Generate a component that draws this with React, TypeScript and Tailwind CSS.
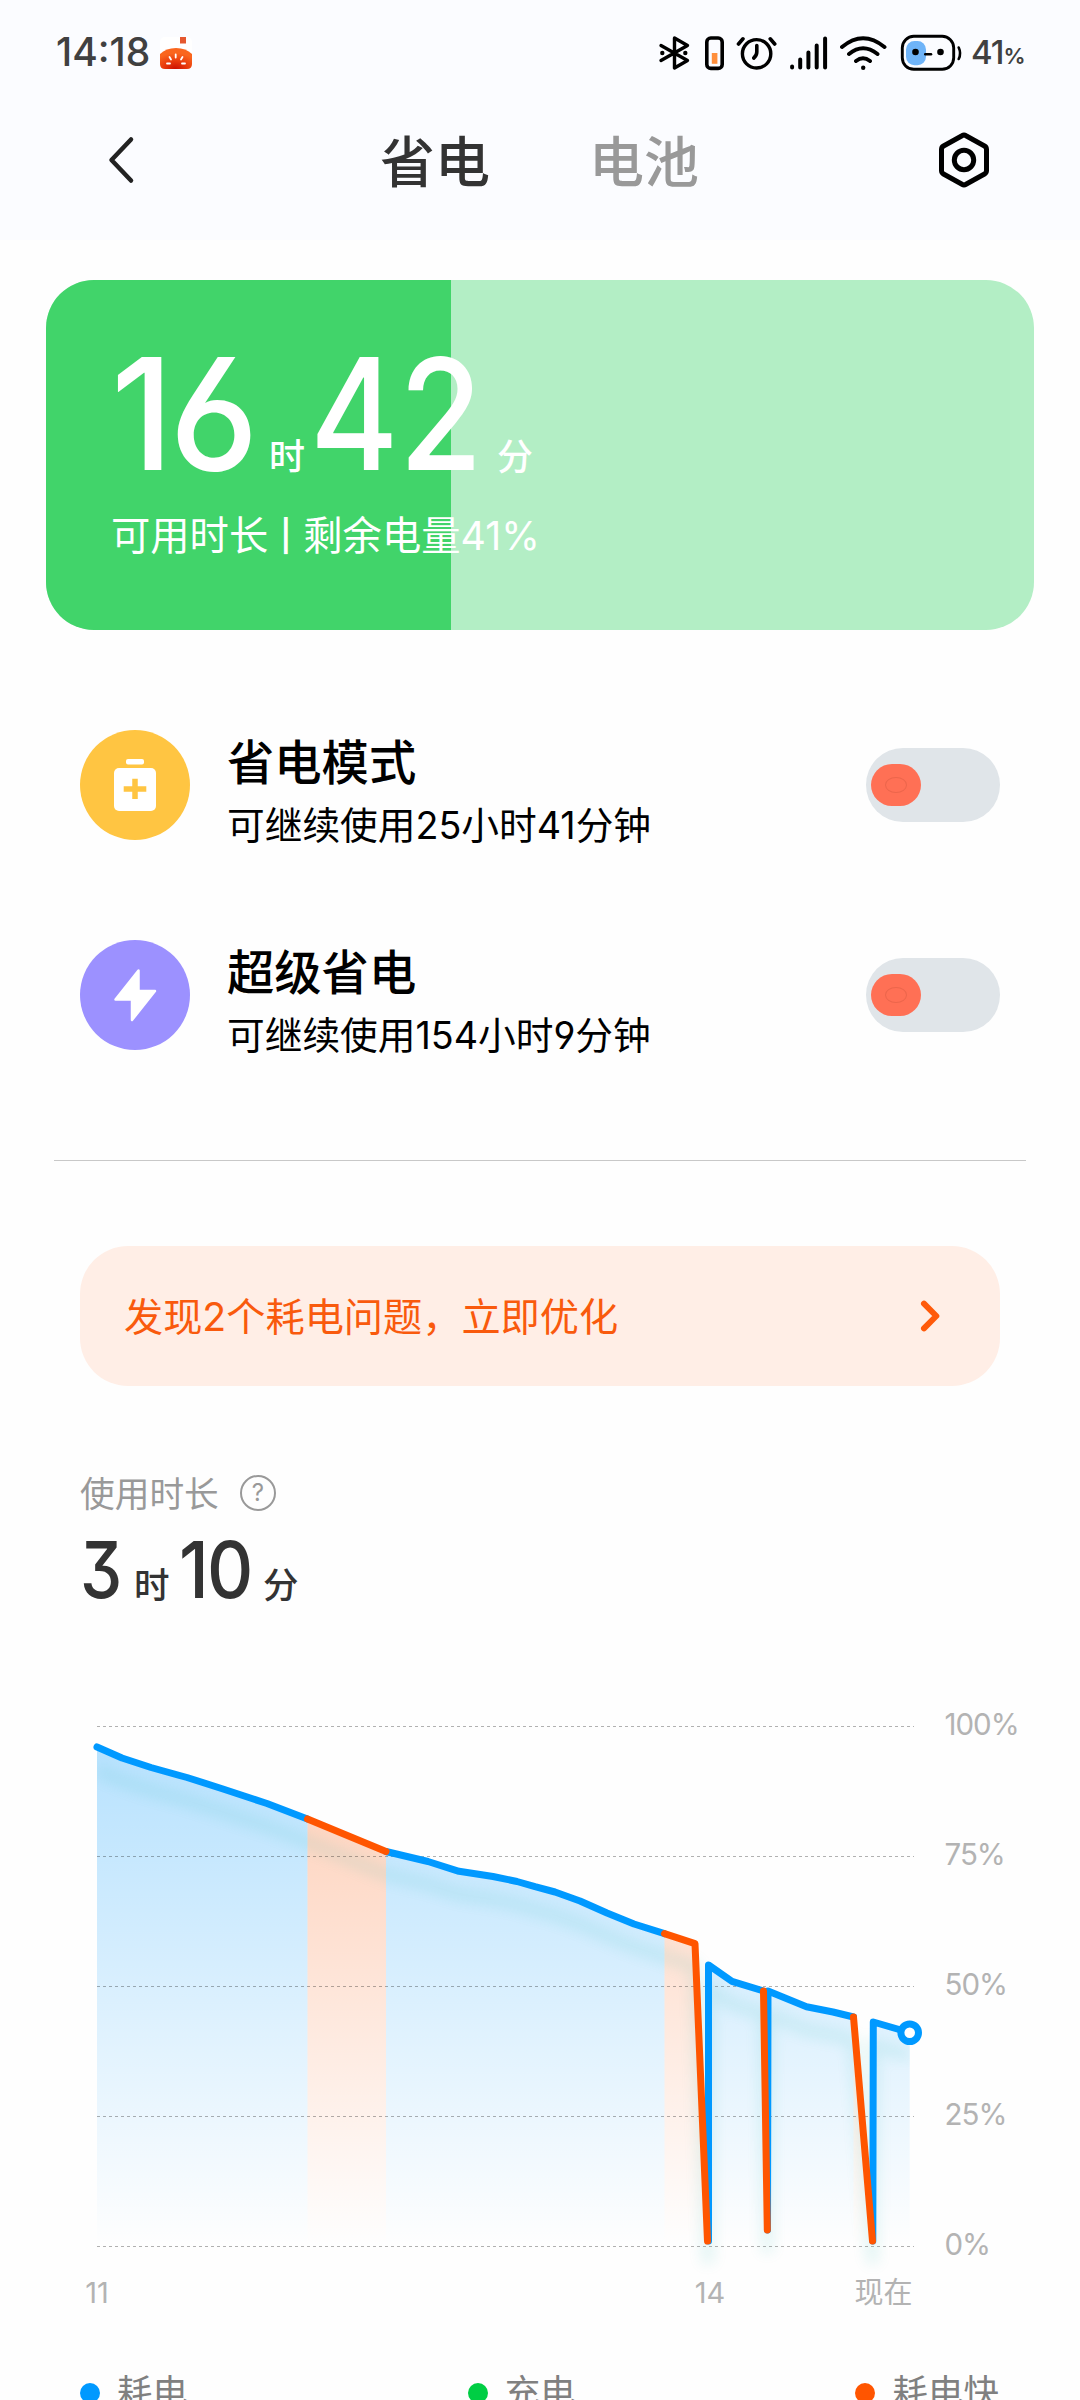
import type { ReactNode } from "react"

type Point = [number, number]

interface Segment {
  kind: "normal" | "fast"
  points: Point[]
}

const COLORS = {
  normal: "#0099ff",
  fast: "#ff5500",
}

const CHART_BOTTOM = 546

// battery curve, in chart pixels
const segments: Segment[] = [
  { kind: "normal", points: [[97, 47], [122, 58], [151, 67.5], [187, 77.5], [223, 89], [267, 103.5], [307.5, 119]] },
  { kind: "normal", points: [[386, 151.5], [428, 161.5], [459, 171.3], [493, 176.5], [517, 181.5], [535, 186.7], [555, 192], [580, 201], [607, 213], [634, 224], [664.5, 233.7]] },
  { kind: "normal", points: [[708.5, 541], [708.5, 265], [732, 281.3], [763.5, 291]] },
  { kind: "normal", points: [[767.5, 530], [768, 291], [806.5, 306.7], [833, 312], [853.5, 317]] },
  { kind: "normal", points: [[872.8, 541], [873.3, 322], [909.7, 332.5]] },
  { kind: "fast", points: [[307.5, 119], [386, 151.5]] },
  { kind: "fast", points: [[664.5, 233.7], [695, 243.7], [707.5, 541]] },
  { kind: "fast", points: [[763.5, 291], [767.3, 530]] },
  { kind: "fast", points: [[853.5, 317], [872.5, 541]] },
]

const gridLines = [
  { y: 26.5, label: "100%" },
  { y: 156.5, label: "75%" },
  { y: 286.5, label: "50%" },
  { y: 416.5, label: "25%" },
  { y: 546.5, label: "0%" },
]

const linePath = (points: Point[]) => "M" + points.map(([x, y]) => `${x} ${y}`).join("L")

const areaPath = (points: Point[]) =>
  `${linePath(points)}L${points[points.length - 1][0]} ${CHART_BOTTOM}L${points[0][0]} ${CHART_BOTTOM}Z`

const StatusIcons = () => (
  <svg width="310" height="40" viewBox="655 32 310 40" fill="none" stroke="#000" strokeLinecap="round" strokeLinejoin="round">
    {/* bluetooth */}
    <path d="M661 44.5 687.5 59.5 674.5 67V37L687.5 44.5 661 59.5" strokeWidth="3.4" />
    <circle cx="662.3" cy="52" r="2.2" fill="#000" stroke="none" />
    <circle cx="685.3" cy="52" r="2.2" fill="#000" stroke="none" />
    {/* device battery */}
    <rect x="706.8" y="37" width="15.4" height="30.4" rx="4" strokeWidth="3.6" />
    <rect x="711.8" y="52" width="5.6" height="10.8" fill="#ff8f3c" stroke="none" />
    {/* alarm */}
    <circle cx="756.6" cy="52.8" r="14.2" strokeWidth="3.4" />
    <path d="M756.8 44.5V51Q756.8 54.5 753.8 57M738.5 43 743 37.8M774.7 43 770.2 37.8" strokeWidth="3.6" />
    {/* signal */}
    <path d="M792.1 65.5V66.5M800.2 58.5V66.5M808.4 51.5V66.5M816.7 44.5V66.5M825.1 37.5V66.5" strokeWidth="4" />
    {/* wifi */}
    <path d="M842 46Q863 28.5 884.5 46M849 53Q863 41.5 877.5 53M856 60Q863 54.5 870 60" strokeWidth="3.9" />
    <circle cx="863.2" cy="66.7" r="2.2" fill="#000" stroke="none" />
    {/* battery */}
    <rect x="906" y="40" width="20" height="24.2" rx="8.5" fill="#6fb4f8" stroke="none" />
    <rect x="902.3" y="35.3" width="51.4" height="33" rx="11.5" strokeWidth="2.9" />
    <path d="M958.7 46.5Q961.5 52.5 958.7 58" strokeWidth="2.6" />
    <circle cx="915.5" cy="51" r="3.3" fill="#000" stroke="none" />
    <circle cx="940.5" cy="51" r="3.3" fill="#000" stroke="none" />
    <path d="M925.3 53.3H931" strokeWidth="2.6" />
  </svg>
)

const Pumpkin = () => (
  <svg width="32" height="32" viewBox="0 0 32 32">
    <defs>
      <radialGradient id="pumpkin" cx="0.48" cy="1" r="0.75">
        <stop offset="0" stopColor="#cc1000" />
        <stop offset="0.5" stopColor="#e83a0c" />
        <stop offset="1" stopColor="#fa661e" />
      </radialGradient>
    </defs>
    <rect width="32" height="32" rx="5" fill="#fff" />
    <rect x="20" y="0" width="6" height="6.5" fill="#e5582f" />
    <path d="M0 17Q6 11 16 11T32 17V27Q32 32 27 32H5Q0 32 0 27Z" fill="url(#pumpkin)" />
    <path d="M15.7 17.5V20.5M9.5 20 11 22.5M22.5 20 21 22.5M7 26.5H10M22 26.5H25" stroke="#fff" strokeWidth="1.8" strokeLinecap="round" />
  </svg>
)

const StatusBar = () => (
  <div className="flex h-[105px] items-center pr-[55px] pl-[56px] text-[#404040]">
    <span className="w-[104px] text-[39px] font-medium whitespace-nowrap">14:18</span>
    <Pumpkin />
    <div className="ml-auto flex items-center">
      <StatusIcons />
      <span className="ml-[6px] w-[54px] text-[33px] font-medium tracking-[-1px] whitespace-nowrap">
        41<span className="text-[22px] font-semibold">%</span>
      </span>
    </div>
  </div>
)

const NavBar = () => (
  <div className="flex h-[110px] items-center pl-[106px]">
    <svg width="30" height="50" viewBox="0 0 30 50" fill="none" stroke="#222" strokeWidth="4.5" strokeLinecap="round" strokeLinejoin="round">
      <path d="M25 4.5 5.5 25 25 45.5" />
    </svg>
    <h1 className="ml-[244px] w-[209px] pt-[4px] text-[55px] font-medium whitespace-nowrap text-[#333]">省电</h1>
    <span className="w-[348px] pt-[4px] text-[55px] font-medium whitespace-nowrap text-[#999]">电池</span>
    <svg width="54" height="58" viewBox="0 0 54 58" fill="none" stroke="#000" strokeWidth="5" strokeLinejoin="round">
      <path d="M25 4.7Q27 3.5 29 4.7L47.5 15Q49.5 16.2 49.5 18.5V39.5Q49.5 41.8 47.5 43L29 53.3Q27 54.5 25 53.3L6.5 43Q4.5 41.8 4.5 39.5V18.5Q4.5 16.2 6.5 15Z" />
      <circle cx="27" cy="29" r="9.7" />
    </svg>
  </div>
)

const BatteryCard = ({ level }: { level: number }) => (
  <section className="relative mx-[46px] mt-10 h-[350px] overflow-hidden rounded-[48px] bg-[#b3eec5] text-white">
    <div className="absolute inset-y-0 left-0 bg-[#41d46a]" style={{ width: `${level}%` }} />
    <div className="relative pt-[54px] pl-[65px]">
      <div className="flex h-[160px] items-baseline leading-[160px] whitespace-nowrap">
        <span className="w-[158px] origin-left scale-x-[0.97] text-[155px] font-medium tracking-[-4px]">16</span>
        <span className="w-[41px] text-[36px] font-medium">时</span>
        <span className="w-[187px] origin-left scale-x-[0.87] text-[155px] font-medium tracking-[1px]">42</span>
        <span className="text-[36px] font-medium">分</span>
      </div>
      <div className="mt-[18px] flex items-center text-[39.3px] leading-[48px] whitespace-nowrap">
        可用时长
        <span className="mx-[12px] text-[31px] font-semibold">|</span>
        剩余电量{level}%
      </div>
    </div>
  </section>
)

const Toggle = () => (
  <div className="flex h-[74px] w-[134px] items-center rounded-full bg-[#e0e5e9] pl-[5px]">
    <div className="flex h-[42px] w-[50px] items-center justify-center rounded-[21px] bg-[#ff7055]">
      <div className="h-4 w-[22px] rounded-[50%] border border-[#ec664c]" />
    </div>
  </div>
)

interface ModeRowProps {
  icon: ReactNode
  title: string
  subtitle: string
}

const ModeRow = ({ icon, title, subtitle }: ModeRowProps) => (
  <div className="flex h-[110px] items-center text-black">
    {icon}
    <div className="ml-[37px] flex flex-1 flex-col pt-[18px] whitespace-nowrap">
      <span className="text-[47.3px] leading-[62px] font-medium">{title}</span>
      <span className="text-[37.7px] leading-[63px]">{subtitle}</span>
    </div>
    <Toggle />
  </div>
)

const SaverIcon = () => (
  <svg width="110" height="110" viewBox="0 0 110 110">
    <circle cx="55" cy="55" r="55" fill="#ffc542" />
    <rect x="46" y="29" width="18" height="5.5" rx="2" fill="#fff" />
    <rect x="34" y="38" width="42" height="43" rx="5" fill="#fff" />
    <path d="M55 48.7V69M43.7 59H66.3" stroke="#ffc542" strokeWidth="5.5" />
  </svg>
)

const BoltIcon = () => (
  <svg width="110" height="110" viewBox="0 0 110 110">
    <circle cx="55" cy="55" r="55" fill="#9c91ff" />
    <path d="M58.5 30.5V51H75L52 80V59.5H35.5Z" fill="#fff" stroke="#fff" strokeWidth="2.5" strokeLinejoin="round" />
  </svg>
)

const UsageChart = () => (
  <svg className="block" width="1080" height="620" viewBox="0 0 1080 620">
    <defs>
      <linearGradient id="normalFill" gradientUnits="userSpaceOnUse" x1="0" y1="47" x2="0" y2="546">
        <stop offset="0" stopColor="#0099ff" stopOpacity="0.28" />
        <stop offset="1" stopColor="#0099ff" stopOpacity="0" />
      </linearGradient>
      <linearGradient id="fastFill" gradientUnits="userSpaceOnUse" x1="0" y1="47" x2="0" y2="546">
        <stop offset="0" stopColor="#ff5500" stopOpacity="0.28" />
        <stop offset="1" stopColor="#ff5500" stopOpacity="0" />
      </linearGradient>
      <filter id="soft" filterUnits="userSpaceOnUse" x="0" y="0" width="1080" height="620">
        <feGaussianBlur stdDeviation="7" />
      </filter>
      <clipPath id="plot">
        <rect x="97" y="0" width="813" height="620" />
      </clipPath>
    </defs>

    {segments.map((s, i) => (
      <path key={i} d={areaPath(s.points)} fill={s.kind === "fast" ? "url(#fastFill)" : "url(#normalFill)"} />
    ))}

    {/* soft shadow below the curve */}
    <g clipPath="url(#plot)">
      <g filter="url(#soft)" opacity="0.1" transform="translate(0 23)" fill="none" stroke="#00a8a0" strokeWidth="12">
        {segments.map((s, i) => (
          <path key={i} d={linePath(s.points)} />
        ))}
      </g>
    </g>

    {gridLines.map((line) => (
      <g key={line.label}>
        <path d={`M97 ${line.y}H914`} stroke="#000" strokeOpacity="0.3" strokeDasharray="3 3" />
        <text x="944.5" y={line.y + 8.5} fontSize="29.5" letterSpacing="-1" fill="#b3b3b3">{line.label}</text>
      </g>
    ))}

    <g fill="none" strokeWidth="7" strokeLinecap="round" strokeLinejoin="round">
      {segments.map((s, i) => (
        <path key={i} d={linePath(s.points)} stroke={COLORS[s.kind]} />
      ))}
    </g>
    <circle cx="909.7" cy="332.7" r="8.8" fill="#fff" stroke="#0099ff" strokeWidth="7" />

    <g fontSize="29" fill="#b3b3b3" textAnchor="middle">
      <text x="97" y="603">11</text>
      <text x="710" y="603">14</text>
      <text x="883.5" y="603">现在</text>
    </g>
  </svg>
)

const Legend = ({ dot, label }: { dot: string; label: string }) => (
  <div className="flex items-center gap-[17px] whitespace-nowrap">
    <i className={`h-5 w-5 rounded-full ${dot}`} />
    <span className="text-[35.5px] leading-10 text-[#808080]">{label}</span>
  </div>
)

export default function App() {
  return (
    <main className="h-[2400px] w-[1080px] overflow-hidden bg-[#fefefe] font-['Inter','Noto_Sans_CJK_SC',sans-serif] [font-feature-settings:'cv03','cv04','cv09']">
      <header className="h-[240px] bg-[#fbfcff]">
        <StatusBar />
        <NavBar />
      </header>

      <BatteryCard level={41} />

      <section className="mx-20 mt-[100px] flex flex-col gap-[100px]">
        <ModeRow icon={<SaverIcon />} title="省电模式" subtitle="可继续使用25小时41分钟" />
        <ModeRow icon={<BoltIcon />} title="超级省电" subtitle="可继续使用154小时9分钟" />
      </section>

      <hr className="mx-[54px] mt-[110px] h-px border-0 bg-[#c8c8c8]" />

      <button className="mx-20 mt-[85px] flex h-[140px] w-[920px] items-center justify-between rounded-[48px] bg-[#ffeee6] pr-[59px] pl-11 whitespace-nowrap text-[#f95a0d]">
        <span className="pt-[3px] text-[39.2px]">发现2个耗电问题，立即优化</span>
        <svg width="22" height="34" viewBox="0 0 22 34" fill="none" stroke="#ff5a0a" strokeWidth="6" strokeLinecap="round" strokeLinejoin="round">
          <path d="M5 4.7 17.3 17 5 29.3" />
        </svg>
      </button>

      <section className="mt-[87px] ml-20 h-[227px]">
        <div className="flex h-10 items-center text-[#999]">
          <span className="w-[160px] pt-[3px] text-[34.7px] whitespace-nowrap">使用时长</span>
          <div className="flex h-9 w-9 items-center justify-center rounded-full border-[2.5px] border-[#999] text-[24px] leading-none">?</div>
        </div>
        <div className="mt-[7px] flex h-[100px] items-baseline leading-[100px] font-medium whitespace-nowrap text-[#333]">
          <span className="w-[54px] origin-left scale-x-[0.86] text-[78px]">3</span>
          <span className="w-[45px] text-[35.5px]">时</span>
          <span className="w-[84px] origin-left scale-x-[0.92] text-[78px] tracking-[-2px]">10</span>
          <span className="text-[35.5px]">分</span>
        </div>
      </section>

      <UsageChart />

      <footer className="mt-[53px] mr-[81px] ml-20 flex justify-between">
        <Legend dot="bg-[#0099ff]" label="耗电" />
        <Legend dot="bg-[#00ce44]" label="充电" />
        <Legend dot="bg-[#ff5500]" label="耗电快" />
      </footer>
    </main>
  )
}
